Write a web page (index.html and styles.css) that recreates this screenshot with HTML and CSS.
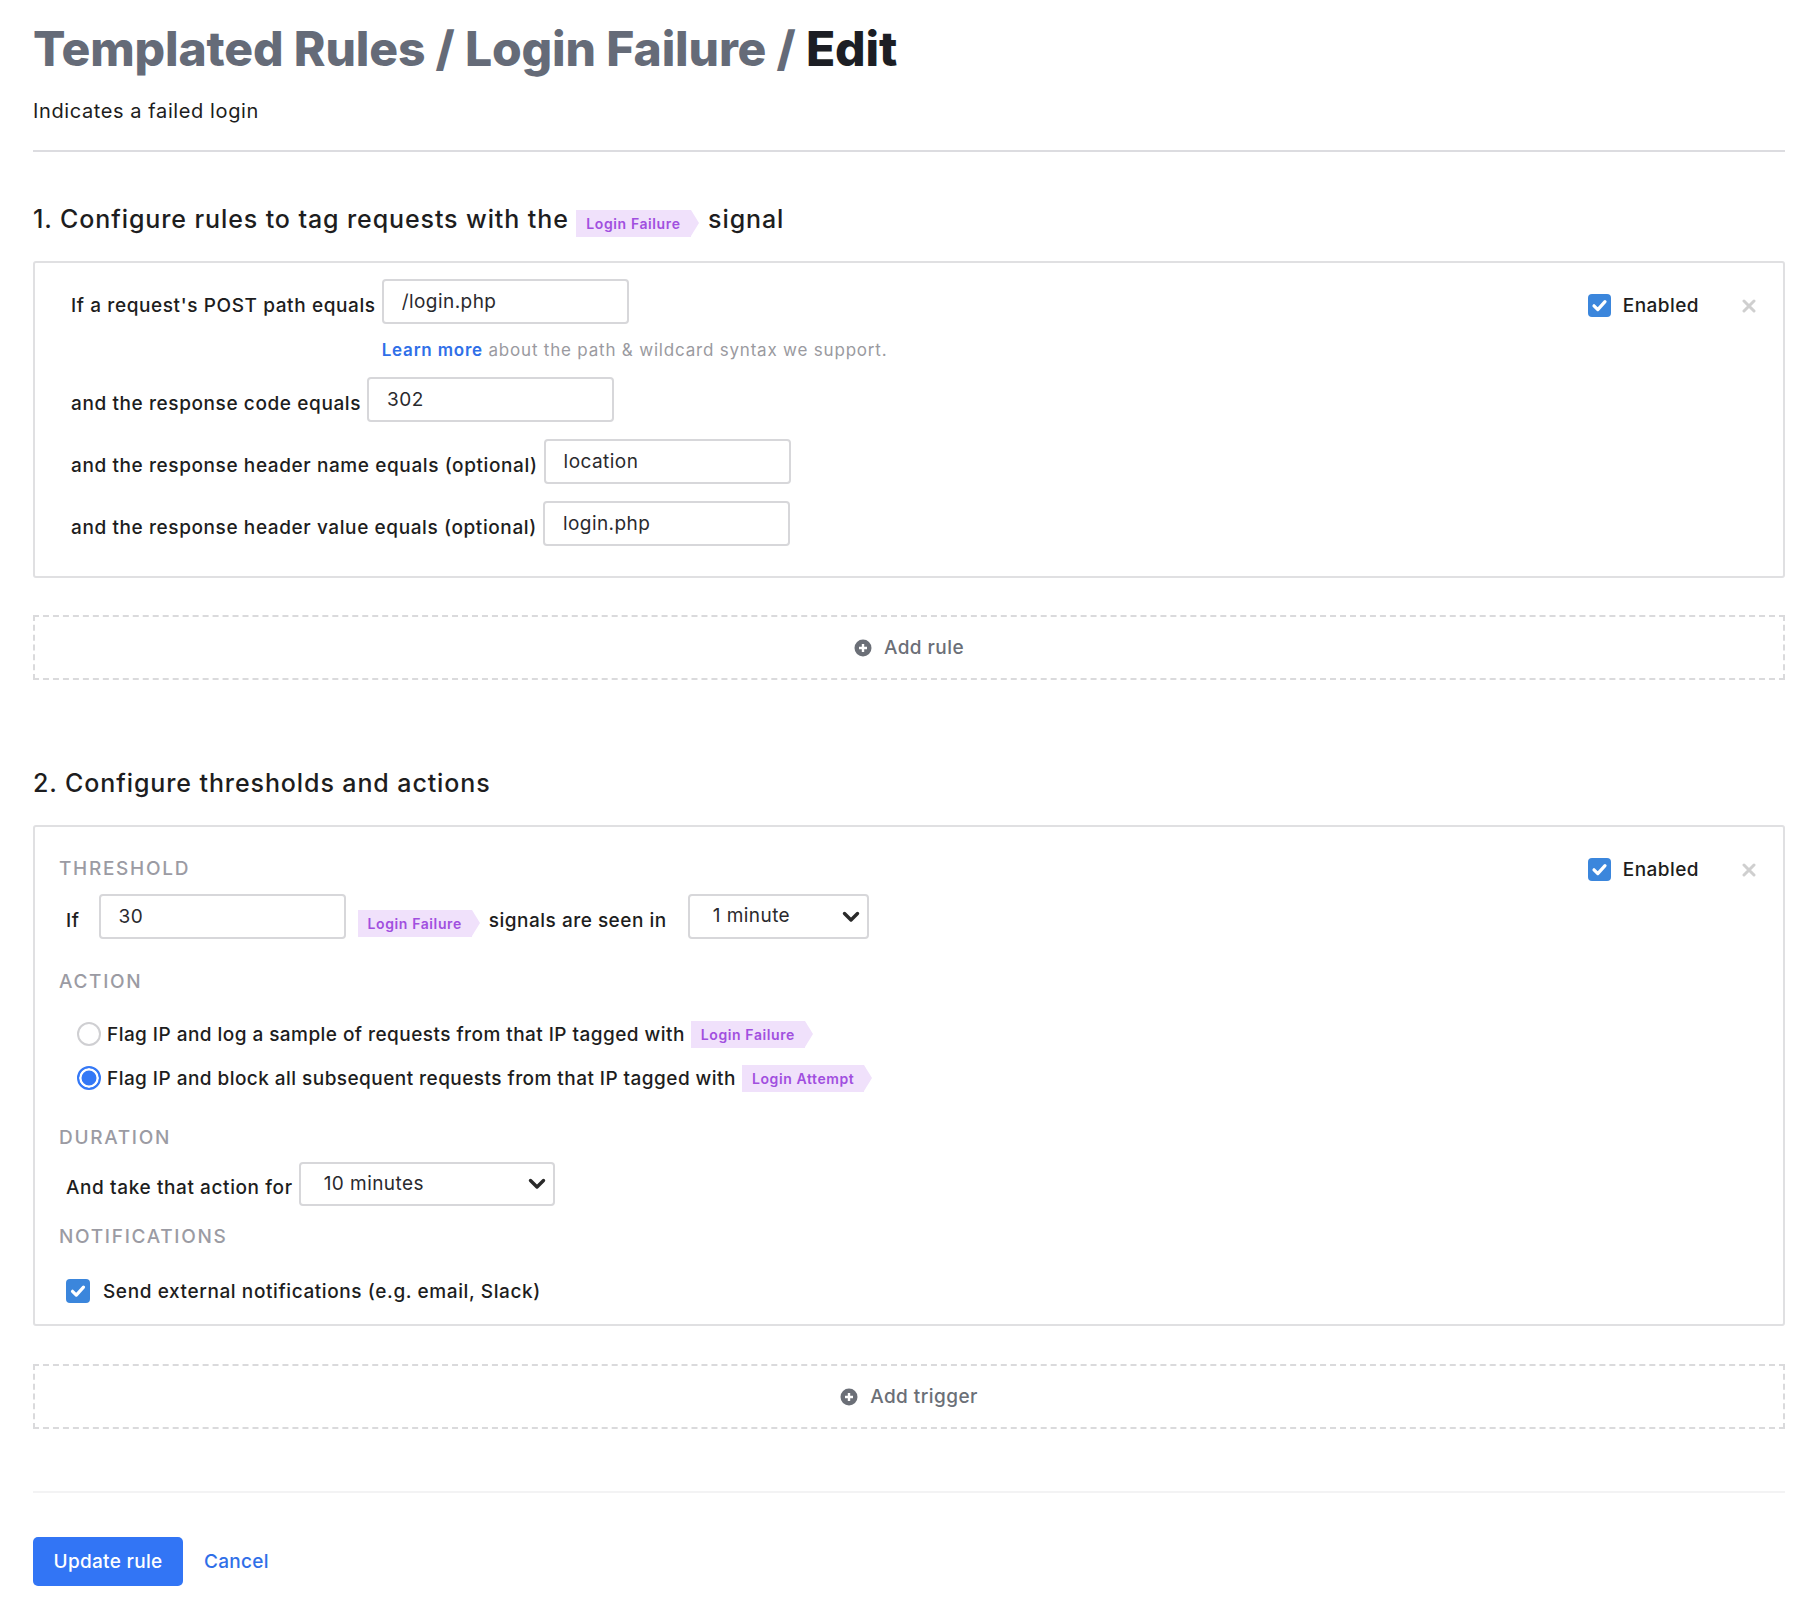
FILE: index.html
```html
<!DOCTYPE html>
<html lang="en">
<head>
<meta charset="utf-8">
<title>Templated Rules / Login Failure / Edit</title>
<link rel="stylesheet" href="styles.css">
</head>
<body>
<main class="page">
  <header class="page-header">
    <h1 class="title"><span class="crumb">Templated Rules / Login Failure / </span><span class="current">Edit</span></h1>
    <p class="subtitle">Indicates a failed login</p>
  </header>

  <section class="section section-rules">
    <h2 class="section-title">1. Configure rules to tag requests with the <span class="tag tag-heading">Login Failure</span> signal</h2>

    <div class="card">
      <div class="card-body rule-body">
        <div class="field-row">
          <label class="field-label">If a request's POST path equals</label>
          <div class="field-stack">
            <input class="text-input" type="text" value="/login.php">
            <p class="help"><a class="help-link" href="#">Learn more</a> about the path &amp; wildcard syntax we support.</p>
          </div>
        </div>
        <div class="field-row row-after-help">
          <label class="field-label">and the response code equals</label>
          <input class="text-input" type="text" value="302">
        </div>
        <div class="field-row row-next">
          <label class="field-label">and the response header name equals (optional)</label>
          <input class="text-input" type="text" value="location">
        </div>
        <div class="field-row row-next">
          <label class="field-label">and the response header value equals (optional)</label>
          <input class="text-input" type="text" value="login.php">
        </div>
      </div>
      <div class="card-controls">
        <span class="checkbox checked"><svg viewBox="0 0 23 23" width="23" height="23"><path d="M6 11.8l3.8 3.8 7.2-8" fill="none" stroke="#fff" stroke-width="3.2" stroke-linecap="round" stroke-linejoin="round"/></svg></span>
        <span class="enabled-text">Enabled</span>
        <svg class="close-icon" viewBox="0 0 14 14" width="14" height="14"><path d="M2 2l10 10M12 2L2 12" stroke="#cfcfcf" stroke-width="3" stroke-linecap="round"/></svg>
      </div>
    </div>

    <div class="add-box">
      <svg class="add-icon" viewBox="0 0 18 18" width="18" height="18"><circle cx="9" cy="9" r="8.5" fill="#6b6f77"/><path d="M9 5v8M5 9h8" stroke="#fff" stroke-width="2.4"/></svg>
      <span>Add rule</span>
    </div>
  </section>

  <section class="section section-thresholds">
    <h2 class="section-title">2. Configure thresholds and actions</h2>

    <div class="card">
      <div class="card-body threshold-body">
        <div class="group-label">Threshold</div>
        <div class="field-row threshold-row">
          <label class="field-label if-label">If</label>
          <input class="text-input" type="text" value="30">
          <span class="tag tag-inline">Login Failure</span>
          <span class="field-label seen-label">signals are seen in</span>
          <div class="select select-minute"><span>1 minute</span><svg class="chevron" viewBox="0 0 18 12" width="18" height="12"><path d="M2.5 2.5L9 9l6.5-6.5" fill="none" stroke="#2a2a2a" stroke-width="3.4" stroke-linecap="round" stroke-linejoin="round"/></svg></div>
        </div>

        <div class="group-label action-label">Action</div>
        <div class="radio-row">
          <span class="radio"></span>
          <span class="radio-text">Flag IP and log a sample of requests from that IP tagged with</span>
          <span class="tag tag-inline">Login Failure</span>
        </div>
        <div class="radio-row radio-row-next">
          <span class="radio selected"></span>
          <span class="radio-text">Flag IP and block all subsequent requests from that IP tagged with</span>
          <span class="tag tag-inline">Login Attempt</span>
        </div>

        <div class="group-label duration-label">Duration</div>
        <div class="field-row duration-row">
          <label class="field-label">And take that action for</label>
          <div class="select select-duration"><span>10 minutes</span><svg class="chevron" viewBox="0 0 18 12" width="18" height="12"><path d="M2.5 2.5L9 9l6.5-6.5" fill="none" stroke="#2a2a2a" stroke-width="3.4" stroke-linecap="round" stroke-linejoin="round"/></svg></div>
        </div>

        <div class="group-label notif-label">Notifications</div>
        <div class="check-row">
          <span class="checkbox checked"><svg viewBox="0 0 24 24" width="24" height="24"><path d="M6.5 12.3l3.8 3.8 7.2-8" fill="none" stroke="#fff" stroke-width="3.2" stroke-linecap="round" stroke-linejoin="round"/></svg></span>
          <span class="check-text">Send external notifications (e.g. email, Slack)</span>
        </div>
      </div>
      <div class="card-controls">
        <span class="checkbox checked"><svg viewBox="0 0 23 23" width="23" height="23"><path d="M6 11.8l3.8 3.8 7.2-8" fill="none" stroke="#fff" stroke-width="3.2" stroke-linecap="round" stroke-linejoin="round"/></svg></span>
        <span class="enabled-text">Enabled</span>
        <svg class="close-icon" viewBox="0 0 14 14" width="14" height="14"><path d="M2 2l10 10M12 2L2 12" stroke="#cfcfcf" stroke-width="3" stroke-linecap="round"/></svg>
      </div>
    </div>

    <div class="add-box add-trigger">
      <svg class="add-icon" viewBox="0 0 18 18" width="18" height="18"><circle cx="9" cy="9" r="8.5" fill="#6b6f77"/><path d="M9 5v8M5 9h8" stroke="#fff" stroke-width="2.4"/></svg>
      <span>Add trigger</span>
    </div>
  </section>

  <footer class="form-footer">
    <button class="btn-primary" type="button">Update rule</button>
    <a class="btn-link" href="#">Cancel</a>
  </footer>
</main>
</body>
</html>
```

FILE: styles.css
```css
* { box-sizing: border-box; }

html, body {
  margin: 0;
  padding: 0;
  background: #ffffff;
}

body {
  font-family: Inter, "Noto Sans", "Liberation Sans", sans-serif;
  color: #1d1d20;
  font-size: 19px;
  letter-spacing: 0.45px;
}

.page {
  padding: 20px 23px 40px 33px;
}

.page-header {
  border-bottom: 2px solid #dcdce0;
  padding-bottom: 26px;
}

.title {
  margin: 0;
  font-size: 48px;
  line-height: 58px;
  font-weight: 800;
  letter-spacing: -0.15px;
  color: #656b78;
}

.title .current {
  color: #1c1e24;
}

.subtitle {
  margin: 20px 0 0;
  font-size: 20px;
  line-height: 26px;
  font-weight: 400;
  letter-spacing: 0.6px;
  color: #1d1d20;
}

.section-title {
  margin: 0;
  font-size: 25px;
  line-height: 32px;
  font-weight: 500;
  letter-spacing: 0.9px;
  color: #1d1d20;
}

.section-rules .section-title {
  margin-top: 51px;
}

.section-thresholds .section-title {
  margin-top: 87px;
}

/* tags */
.tag {
  display: inline-block;
  position: relative;
  background: #f0e1fb;
  color: #a14fdf;
  font-size: 14px;
  font-weight: 600;
  line-height: 27px;
  height: 27px;
  padding: 0 10px;
  margin-right: 8px;
  vertical-align: middle;
  letter-spacing: 0.6px;
}

.tag::after {
  content: "";
  position: absolute;
  top: 0;
  right: -8px;
  border-top: 13.5px solid transparent;
  border-bottom: 13.5px solid transparent;
  border-left: 8px solid #f0e1fb;
}

.tag-heading {
  margin-right: 10px;
  top: 2px;
}

/* cards */
.card {
  display: flex;
  align-items: flex-start;
  border: 2px solid #e0e0e2;
  border-radius: 3px;
  margin-top: 26px;
}

.card-body {
  flex: 1;
}

.rule-body {
  padding: 16px 0 30px 36px;
}

.threshold-body {
  padding: 27px 0 17px 24px;
}

.card-controls {
  display: flex;
  align-items: center;
  padding: 31px 27px 0 0;
}

.checkbox {
  display: inline-flex;
  width: 23px;
  height: 23px;
  border-radius: 4px;
  background: #3b86dc;
  flex: none;
}

.checkbox svg {
  display: block;
}

.enabled-text {
  margin-left: 12px;
  font-size: 19px;
  font-weight: 500;
  color: #1d1d20;
}

.close-icon {
  margin-left: 43px;
  display: block;
}

/* fields */
.field-row {
  display: flex;
  align-items: baseline;
}

.row-after-help {
  margin-top: 15px;
}

.row-next {
  margin-top: 17px;
}

.field-label {
  position: relative;
  top: 4px;
  font-size: 19px;
  font-weight: 500;
  letter-spacing: 0.6px;
  color: #1d1d20;
  margin-right: 6px;
  white-space: nowrap;
}

.field-stack {
  display: block;
}

.text-input {
  width: 247px;
  height: 45px;
  border: 2px solid #d7d7da;
  border-radius: 4px;
  padding: 0 18px;
  font-family: Inter, "Noto Sans", "Liberation Sans", sans-serif;
  font-size: 19px;
  letter-spacing: 0.45px;
  color: #2a2a2e;
  background: #fff;
  outline: none;
}

.help {
  margin: 14px 0 0;
  font-size: 17px;
  line-height: 24px;
  letter-spacing: 0.8px;
  color: #9a9aa0;
  font-weight: 400;
}

.help-link {
  color: #2f6fe8;
  font-weight: 600;
  text-decoration: none;
}

/* threshold */
.group-label {
  position: relative;
  top: 2px;
  font-size: 19px;
  line-height: 26px;
  font-weight: 500;
  letter-spacing: 1.7px;
  color: #9b9ba3;
  text-transform: uppercase;
}

.threshold-row {
  margin-top: 14px;
  padding-left: 7px;
}

.threshold-row .if-label {
  margin-right: 19px;
}

.threshold-row .text-input {
  margin-right: 12px;
}

.threshold-row .tag {
  align-self: center;
  margin-top: 14px;
  margin-right: 17px;
}

.threshold-row .seen-label {
  letter-spacing: 0.5px;
  margin-right: 21px;
}

.select {
  display: flex;
  align-items: center;
  justify-content: space-between;
  height: 45px;
  border: 2px solid #d7d7da;
  border-radius: 4px;
  background: #fff;
  font-size: 19px;
  color: #2a2a2e;
  padding: 0 7px 0 23px;
  align-self: center;
}

.select span {
  position: relative;
  top: -1px;
}

.select-minute {
  width: 181px;
}

.select-duration {
  width: 256px;
  height: 44px;
}

.chevron {
  display: block;
}

.action-label {
  margin-top: 28px;
}

.radio-row {
  display: flex;
  align-items: center;
  height: 32px;
  margin-top: 25px;
  padding-left: 18px;
}

.radio-row-next {
  margin-top: 12px;
}

.radio {
  width: 24px;
  height: 24px;
  border-radius: 50%;
  border: 2px solid #cfcfd2;
  background: #fff;
  flex: none;
}

.radio.selected {
  border: 2.5px solid #3478f6;
  background: #3478f6;
  box-shadow: inset 0 0 0 2.5px #fff;
}

.radio-text {
  margin-left: 6px;
  margin-right: 6px;
  font-size: 19px;
  font-weight: 500;
  color: #1d1d20;
}

.duration-label {
  margin-top: 29px;
}

.duration-row {
  margin-top: 13px;
  padding-left: 7px;
  align-items: center;
}

.duration-row .field-label {
  top: 3px;
}

.notif-label {
  margin-top: 16px;
}

.check-row {
  display: flex;
  align-items: center;
  height: 32px;
  margin-top: 27px;
  padding-left: 7px;
}

.check-row .checkbox {
  width: 24px;
  height: 24px;
}

.check-text {
  margin-left: 13px;
  font-size: 19px;
  font-weight: 500;
  letter-spacing: 0.6px;
  color: #1d1d20;
}

/* add boxes */
.add-box {
  display: flex;
  align-items: center;
  justify-content: center;
  height: 65px;
  border: 2px dashed #dadadc;
  margin-top: 37px;
  color: #6b6f77;
  font-size: 19px;
  font-weight: 500;
}

.add-icon {
  margin-right: 12px;
  display: block;
}

.add-trigger {
  margin-top: 38px;
}

/* footer */
.form-footer {
  display: flex;
  align-items: center;
  border-top: 2px solid #f3f3f4;
  margin-top: 62px;
  padding-top: 44px;
}

.btn-primary {
  width: 150px;
  height: 49px;
  border: none;
  border-radius: 5px;
  background: #3275f5;
  color: #fff;
  font-family: Inter, "Noto Sans", "Liberation Sans", sans-serif;
  font-size: 19px;
  letter-spacing: 0.3px;
  font-weight: 500;
  cursor: pointer;
}

.btn-link {
  margin-left: 21px;
  color: #2f6fe8;
  font-size: 19px;
  letter-spacing: 0.3px;
  font-weight: 500;
  text-decoration: none;
}
```
